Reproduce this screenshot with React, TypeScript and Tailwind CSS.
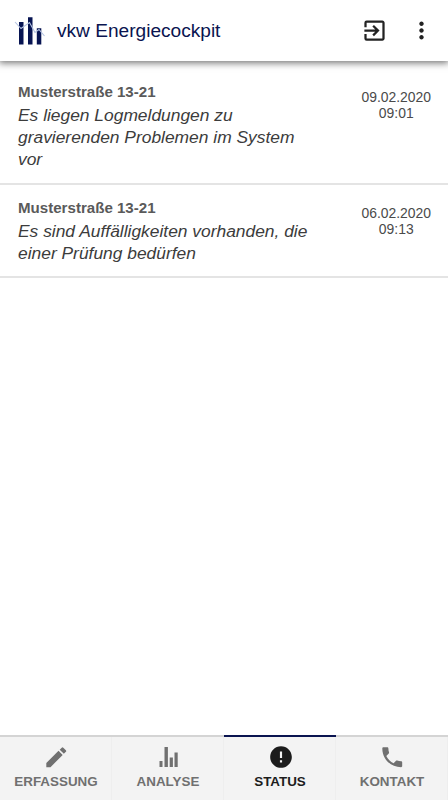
import clsx from 'clsx'
import { MdEdit, MdError, MdExitToApp, MdMoreVert, MdPhone } from 'react-icons/md'

const messages = [
    { address: 'Musterstraße 13-21', text: 'Es liegen Logmeldungen zu gravierenden Problemen im System vor', date: '09.02.2020', time: '09:01' },
    { address: 'Musterstraße 13-21', text: 'Es sind Auffälligkeiten vorhanden, die einer Prüfung bedürfen', date: '06.02.2020', time: '09:13' },
]

const BarsIcon = () => (
    <svg width="20" height="20" viewBox="0 0 20 20" fill="currentColor">
        <path d="M0.5 14h3v6h-3zM5.5 0h3.4v20H5.5zM10.7 10.5h3.2V20h-3.2zM15.5 5.5h3.2V20h-3.2z" />
    </svg>
)

const tabs = [
    { label: 'ERFASSUNG', icon: <MdEdit size={26.5} /> },
    { label: 'ANALYSE', icon: <BarsIcon /> },
    { label: 'STATUS', icon: <MdError size={26} /> },
    { label: 'KONTAKT', icon: <MdPhone size={26.5} /> },
]

const Logo = () => (
    <svg width="32" height="30" viewBox="0 0 32 30">
        <path fill="#071452" d="M5 6h4.5v22.5H5zM14 1.3h4.5v27.2H14zM22.8 12.2h4.5v16.3h-4.5z" />
        <path fill="none" stroke="#b4c3e2" strokeWidth="1.1" d="M1 6l6 6.5L15.5 6.5l5.5 10 4-3 5.5 6.5" />
    </svg>
)

const App = () => {
    const active = 'STATUS'

    return (
        <div className="flex h-screen flex-col bg-white font-['Liberation_Sans',Arial,sans-serif]">
            <header className="flex h-[61px] shrink-0 items-center bg-white pl-[14px] pr-[13px] text-[#222] shadow-[0_1px_7px_1px_rgba(0,0,0,0.55)]">
                <Logo />
                <h1 className="ml-[11px] flex-1 pt-px text-[19.1px] text-[#0a1450]">vkw Energiecockpit</h1>
                <MdExitToApp size={27} />
                <MdMoreVert size={27} className="ml-5" />
            </header>
            <main className="flex-1">
                {messages.map((message) => (
                    <div key={message.date} className="flex border-b-2 border-[#e4e4e4] pb-3 pl-[18px] pr-[17px] first:pt-[21px] first:pb-[13px] pt-[13px]">
                        <div className="w-[300px]">
                            <h2 className="mb-0.5 text-[15.1px] leading-5 font-bold text-[#5a5a5a]">{message.address}</h2>
                            <p className="text-[17.4px] leading-[22px] italic text-[#3c3c3c]">{message.text}</p>
                        </div>
                        <div className="ml-auto pt-[7px] text-center text-[13.9px] leading-4 text-[#4a4a4a]">
                            <div>{message.date}</div>
                            <div>{message.time}</div>
                        </div>
                    </div>
                ))}
            </main>
            <nav className="grid h-[65px] shrink-0 grid-cols-4 bg-[#f3f3f3]">
                {tabs.map((tab) => (
                    <button
                        key={tab.label}
                        className={clsx(
                            'flex flex-col items-center border-t-2 text-[13.4px] font-bold shadow-[inset_-1px_0_0_#eeeeee]',
                            tab.label === active ? 'border-t-[#0a1450] text-[#1c1c1c]' : 'border-t-[#d4d4d4] text-[#707070]'
                        )}
                    >
                        <span className="mt-[7px] flex h-[26px] items-center pl-px">{tab.icon}</span>
                        <span className="mt-0.5 leading-5">{tab.label}</span>
                    </button>
                ))}
            </nav>
        </div>
    )
}

export default App
